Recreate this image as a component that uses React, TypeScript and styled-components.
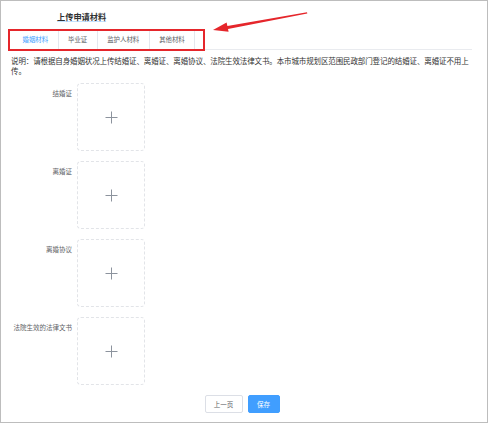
import React from "react";
import styled, { createGlobalStyle } from "styled-components";

const Global = createGlobalStyle`
  html, body { margin: 0; padding: 0; background: #fff; }
  body { font-family: "Noto Sans CJK SC", "Noto Sans", sans-serif; }
  * { box-sizing: border-box; }
`;

const Frame = styled.div`
  position: relative;
  width: 488px;
  height: 423px;
  border: 1px solid #bdbdbd;
  padding: 9px 15px 0 7px;
  background: #fff;
`;

const Title = styled.div`
  font-size: 8.2px;
  font-weight: 700;
  line-height: 12px;
  color: #303133;
  padding-left: 49px;
  span {
    text-decoration: underline;
    text-decoration-color: rgba(64, 158, 255, 0.3);
    text-underline-offset: 1px;
  }
`;

const TabsHeader = styled.div`
  margin-top: 7px;
  height: 21px;
  border-bottom: 1px solid #e9ebef;
  display: flex;
`;

const TabStrip = styled.div`
  position: relative;
  display: flex;
  margin-left: 5px;
  &::after {
    content: "";
    position: absolute;
    left: -5px;
    right: -10px;
    top: 0;
    bottom: -2px;
    border: 2px solid #e5262b;
    pointer-events: none;
  }
`;

const Tab = styled.div<{ $active?: boolean }>`
  height: 20px;
  padding: 0 9.5px;
  display: flex;
  align-items: center;
  font-size: 6.4px;
  color: ${(p) => (p.$active ? "#409eff" : "#606266")};
  border-right: 1px solid #e4e7ed;
  white-space: nowrap;
`;

const Description = styled.p`
  margin: 6px 0 0;
  padding-left: 3px;
  font-size: 7.5px;
  letter-spacing: -0.12px;
  line-height: 9.5px;
  color: #333;
`;

const Form = styled.div`
  margin-top: 8px;
  display: flex;
  flex-direction: column;
  gap: 10px;
`;

const Row = styled.div`
  display: flex;
  gap: 5px;
`;

const Label = styled.div`
  width: 64px;
  text-align: right;
  font-size: 6.5px;
  line-height: 20px;
  color: #606266;
  white-space: nowrap;
`;

const UploadBox = styled.div`
  width: 68px;
  height: 68px;
  border: 1px dashed #e2e4e8;
  border-radius: 4px;
  display: flex;
  align-items: center;
  justify-content: center;
  background: #fff;
`;

const Actions = styled.div`
  margin-top: 10px;
  display: flex;
  justify-content: center;
  gap: 5px;
  padding-left: 4px;
`;

const Button = styled.button<{ $primary?: boolean; $w: number }>`
  width: ${(p) => p.$w}px;
  height: 18px;
  padding: 0;
  font-family: inherit;
  font-size: 6.5px;
  border-radius: 2px;
  border: 1px solid ${(p) => (p.$primary ? "#409eff" : "#dcdfe6")};
  background: ${(p) => (p.$primary ? "#409eff" : "#fff")};
  color: ${(p) => (p.$primary ? "#fff" : "#606266")};
`;

const ArrowSvg = styled.svg`
  position: absolute;
  left: -1px;
  top: -1px;
  pointer-events: none;
`;

const Plus = () => (
  <svg width="13" height="13" viewBox="0 0 13 13">
    <path d="M6.5 0.5V12.5M0.5 6.5H12.5" stroke="#8c939d" strokeWidth="1" fill="none" />
  </svg>
);

const items = ["结婚证", "离婚证", "离婚协议", "法院生效的法律文书"];

export default function App() {
  return (
    <>
      <Global />
      <Frame>
        <Title>
          <span>上传申请材料</span>
        </Title>
        <TabsHeader>
          <TabStrip>
            <Tab $active>婚姻材料</Tab>
            <Tab>毕业证</Tab>
            <Tab>监护人材料</Tab>
            <Tab>其他材料</Tab>
          </TabStrip>
        </TabsHeader>
        <Description>
          说明：请根据自身婚姻状况上传结婚证、离婚证、离婚协议、法院生效法律文书。本市城市规划区范围民政部门登记的结婚证、离婚证不用上传。
        </Description>
        <Form>
          {items.map((t) => (
            <Row key={t}>
              <Label>{t}</Label>
              <UploadBox>
                <Plus />
              </UploadBox>
            </Row>
          ))}
        </Form>
        <Actions>
          <Button $w={38}>上一页</Button>
          <Button $w={32} $primary>
            保存
          </Button>
        </Actions>
        <ArrowSvg width="489" height="60" viewBox="0 0 489 60">
          <polygon
            points="307,12.3 227.4,25.9 226.6,22.6 213,30 228.6,31.8 228,28.9 307.3,13.6"
            fill="#e5262b"
          />
        </ArrowSvg>
      </Frame>
    </>
  );
}
